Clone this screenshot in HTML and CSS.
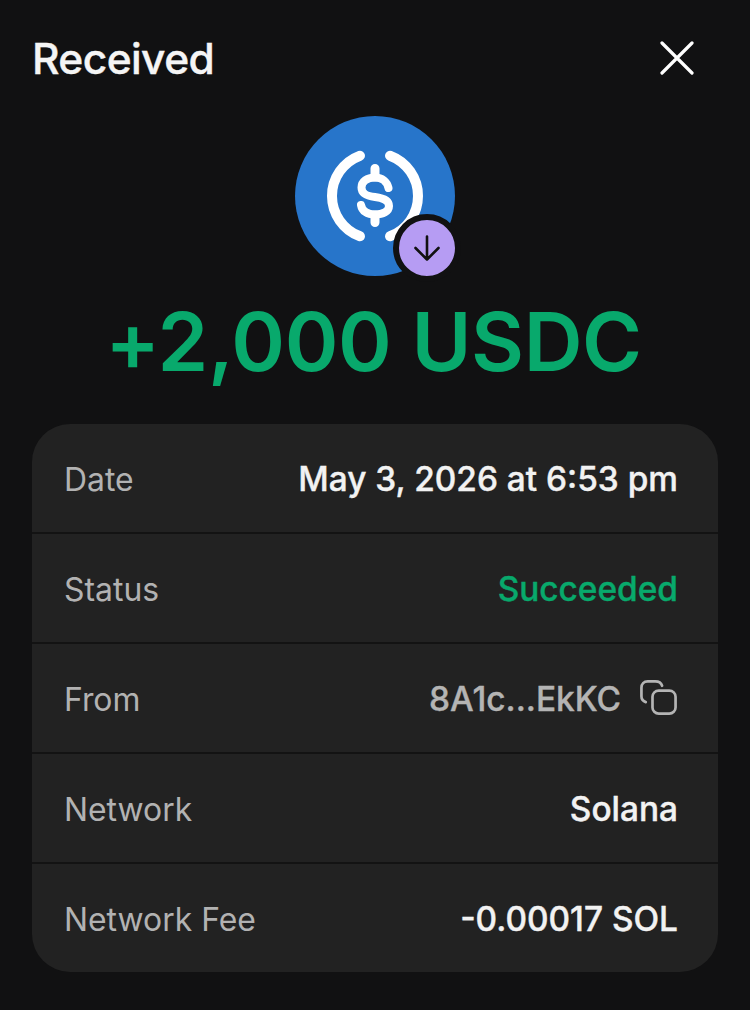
FILE: index.html
```html
<!DOCTYPE html>
<html lang="en">
<head>
    <meta charset="utf-8">
    <title>Received</title>
    <link rel="stylesheet" href="styles.css">
</head>
<body>
<div class="screen">
    <div class="top_bar">
        <h1 class="title">Received</h1>
        <svg class="close_icon" width="34" height="34" viewBox="0 0 34 34" fill="none" stroke="#fff" stroke-width="3.2" stroke-linecap="round">
            <path d="M2 2 L32 32 M32 2 L2 32"/>
        </svg>
    </div>
    <div class="logo">
        <svg width="160" height="160" viewBox="0 0 160 160">
            <circle cx="80" cy="80" r="80" fill="#2775ca"/>
            <g fill="none" stroke="#fff" stroke-linecap="round">
                <path stroke-width="10" d="M65 39.700 A 43 43 0 0 0 65 120.300"/>
                <path stroke-width="10" d="M95 39.700 A 43 43 0 0 1 95 120.300"/>
                <path stroke-width="8" d="M93.500 72 C92 65.500 87 61.500 80 61.500 C72 61.500 66.500 65.500 66.500 71.500 C66.500 78 72 80 80 81 C88 82 94 84.500 94 90 C94 95.500 88 98.500 80 98.500 C72 98.500 67 95 66 89"/>
                <path stroke-width="9" d="M80 52.500 V61 M80 99 V106.500"/>
            </g>
        </svg>
        <div class="badge">
            <svg width="28" height="28" viewBox="0 0 28 28" fill="none" stroke="#111" stroke-width="2.6" stroke-linecap="round" stroke-linejoin="round">
                <path d="M14 2.500 V25.500 M2.500 14 L14 25.500 L25.500 14"/>
            </svg>
        </div>
    </div>
    <div class="amount">+2,000 USDC</div>
    <div class="card">
        <div class="row">
            <span class="label">Date</span>
            <span class="value">May 3, 2026 at 6:53 pm</span>
        </div>
        <div class="row">
            <span class="label">Status</span>
            <span class="value green">Succeeded</span>
        </div>
        <div class="row">
            <span class="label">From</span>
            <span class="value_group">
                <span class="value muted">8A1c...EkKC</span>
                <svg class="copy_icon" width="37" height="37" viewBox="0 0 38.500 38.500" fill="none" stroke="#b4b4b4" stroke-width="2.8" stroke-linecap="round">
                    <rect x="13" y="11" width="24" height="24" rx="6.5"/>
                    <path d="M6 23 C3 22 1.500 20 1.500 17 V8 C1.500 4 4 1.500 8 1.500 H16 C20 1.500 22 3 23 6"/>
                </svg>
            </span>
        </div>
        <div class="row">
            <span class="label">Network</span>
            <span class="value">Solana</span>
        </div>
        <div class="row">
            <span class="label">Network Fee</span>
            <span class="value">-0.00017 SOL</span>
        </div>
    </div>
</div>
</body>
</html>
```

FILE: styles.css
```css
*{margin: 0;padding: 0;box-sizing: border-box;}
html,body{height: 100%;}
body{background: #111112;font-family: Inter, "Liberation Sans", sans-serif;color: #fff;}
.screen{width: 750px;height: 1010px;padding: 0 32px;overflow: hidden;}
.top_bar{display: flex;justify-content: space-between;align-items: center;height: 116px;padding: 0 24px 0 0;}
.title{font-size: 42.5px;font-weight: 500;letter-spacing: -0.6px;color: #f5f5f5;-webkit-text-stroke: 0.4px #f5f5f5;}
.close_icon{display: block;}
.logo{position: relative;width: 160px;height: 160px;margin: 0 auto;}
.logo svg{display: block;}
.badge{position: absolute;left: 98px;top: 98px;width: 68px;height: 68px;border: 6px solid #111112;border-radius: 50%;background: #b69cf3;display: flex;align-items: center;justify-content: center;}
.amount{margin-top: 20px;height: 92px;line-height: 92px;padding-right: 3px;text-align: center;font-size: 81.5px;font-weight: 600;letter-spacing: -0.4px;color: #08a96c;}
.card{margin-top: 36px;width: 686px;background: #222;border-radius: 38px;overflow: hidden;}
.row{display: flex;justify-content: space-between;align-items: center;height: 110px;padding: 2px 40px 0 32px;border-top: 2px solid #131313;font-size: 31.9px;}
.row:first-child{border-top: 0;height: 108px;}
.label{color: #b2b2b2;}
.value{font-size: 33.4px;font-weight: 500;color: #f2f2f2;-webkit-text-stroke: 0.4px;}
.green{color: #08a96c;}
.muted{color: #b4b4b4;}
.value_group{display: flex;align-items: center;gap: 19px;}
.copy_icon{display: block;margin-right: 1px;margin-bottom: 2px;}
```
